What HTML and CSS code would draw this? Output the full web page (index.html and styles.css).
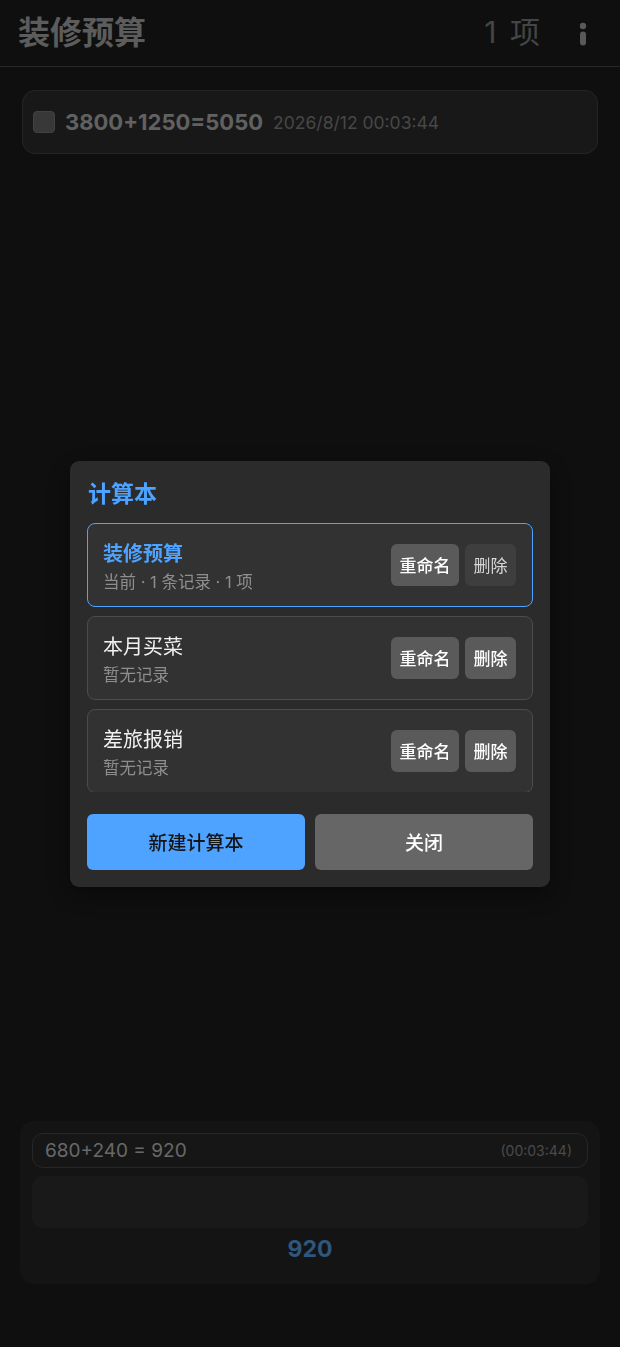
FILE: index.html
```html
<!DOCTYPE html>
<html lang="zh-CN">
<head>
    <meta charset="UTF-8">
    <meta name="viewport" content="width=device-width, initial-scale=1.0">
    <title>装修预算</title>
    <link rel="stylesheet" href="styles.css">
</head>
<body>

<div class="app">
    <header class="topbar">
        <h1 class="book-title">装修预算</h1>
        <div class="topbar-right">
            <span class="item-count">1 项</span>
            <span class="info-btn">
                <svg width="8" height="24" viewBox="0 0 8 24">
                    <circle cx="4" cy="4" r="3.2" fill="currentColor"/>
                    <rect x="1" y="9.5" width="6" height="14" rx="3" fill="currentColor"/>
                </svg>
            </span>
        </div>
    </header>

    <main class="records">
        <div class="record">
            <span class="check"></span>
            <span class="record-expr">3800+1250=5050</span>
            <span class="record-date">2026/8/12 00:03:44</span>
        </div>
    </main>

    <section class="calc-panel">
        <div class="last-line">
            <span class="last-expr">680+240 = 920</span>
            <span class="last-time">(00:03:44)</span>
        </div>
        <div class="input-area"></div>
        <div class="result">920</div>
    </section>
</div>

<!-- 计算本弹窗 -->
<div class="overlay">
    <div class="modal">
        <h2 class="modal-title">计算本</h2>
        <div class="book-list">
            <div class="book active">
                <div class="book-info">
                    <div class="book-name">装修预算</div>
                    <div class="book-meta">当前 · 1 条记录 · 1 项</div>
                </div>
                <div class="book-actions">
                    <button class="small-btn">重命名</button>
                    <button class="small-btn dim">删除</button>
                </div>
            </div>
            <div class="book">
                <div class="book-info">
                    <div class="book-name">本月买菜</div>
                    <div class="book-meta">暂无记录</div>
                </div>
                <div class="book-actions">
                    <button class="small-btn">重命名</button>
                    <button class="small-btn">删除</button>
                </div>
            </div>
            <div class="book">
                <div class="book-info">
                    <div class="book-name">差旅报销</div>
                    <div class="book-meta">暂无记录</div>
                </div>
                <div class="book-actions">
                    <button class="small-btn">重命名</button>
                    <button class="small-btn">删除</button>
                </div>
            </div>
        </div>
        <div class="modal-footer">
            <button class="big-btn primary">新建计算本</button>
            <button class="big-btn">关闭</button>
        </div>
    </div>
</div>

</body>
</html>
```

FILE: styles.css
```css
* {
    box-sizing: border-box;
}
body {
    margin: 0;
    background-color: #1e1e1e;
    color: #c0c0c0;
    font-family: Inter, "Noto Sans CJK SC", sans-serif;
}
.app {
    height: 1347px;
    display: flex;
    flex-direction: column;
}
.topbar {
    height: 67px;
    display: flex;
    align-items: center;
    justify-content: space-between;
    padding: 0 33px 7px 18px;
    border-bottom: 1px solid #4e4e4e;
}
.book-title {
    margin: 0;
    font-size: 32px;
    font-weight: 700;
    color: #b8b8b8;
}
.topbar-right {
    display: flex;
    align-items: center;
    gap: 39px;
}
.item-count {
    font-size: 30px;
    color: #8a8a8a;
    word-spacing: 5px;
}
.info-btn {
    color: #b2b2b2;
    display: flex;
    margin-top: 8px;
}
.records {
    flex: 1;
    padding: 23px 22px;
}
.record {
    height: 64px;
    display: flex;
    align-items: center;
    padding: 0 10px;
    background-color: #303030;
    border: 1px solid #4a4a4a;
    border-radius: 13px;
}
.check {
    width: 22px;
    height: 22px;
    border-radius: 4px;
    background-color: #707070;
    border: 1px solid #858585;
    margin-right: 10px;
}
.record-expr {
    font-size: 22px;
    font-weight: 700;
    color: #c2c2c2;
    margin-right: 10px;
}
.record-date {
    font-size: 17.5px;
    color: #8e8e8e;
}
.calc-panel {
    margin: 0 20px 63px;
    padding: 12px 12px 14px;
    background-color: #282828;
    border-radius: 14px;
}
.last-line {
    height: 35px;
    display: flex;
    align-items: center;
    justify-content: space-between;
    padding: 0 15px 0 12px;
    background-color: #2c2c2c;
    border: 1px solid #4e4e4e;
    border-radius: 11px;
}
.last-expr {
    font-size: 19px;
    color: #d0d0d0;
}
.last-time {
    font-size: 14px;
    color: #949494;
}
.input-area {
    height: 52px;
    margin-top: 8px;
    background-color: #333333;
    border-radius: 11px;
}
.result {
    height: 42px;
    display: flex;
    align-items: center;
    justify-content: center;
    font-size: 23px;
    font-weight: 700;
    color: #5eacf8;
}

/* 弹窗 */
.overlay {
    position: fixed;
    top: 0;
    left: 0;
    right: 0;
    bottom: 0;
    background-color: rgba(0, 0, 0, 0.5);
    display: flex;
    align-items: center;
    justify-content: center;
}
.modal {
    width: 480px;
    background-color: #2b2b2b;
    border-radius: 9px;
    padding: 17px;
    box-shadow: 0 8px 24px rgba(0, 0, 0, 0.4);
}
.modal-title {
    margin: 1px 0 13px 1px;
    font-size: 23px;
    font-weight: 700;
    color: #4da3ff;
    line-height: 31px;
}
.book-list {
    display: flex;
    flex-direction: column;
    gap: 9px;
    max-height: 269px;
    overflow: hidden;
}
.book {
    flex-shrink: 0;
    height: 84px;
    display: flex;
    align-items: center;
    justify-content: space-between;
    padding: 0 16px 0 15px;
    background-color: #323232;
    border: 1px solid #4c4c4c;
    border-radius: 8px;
}
.book.active {
    border: 1.5px solid #4da3ff;
}
.book-info {
    padding-top: 4px;
}
.book-name {
    font-size: 20px;
    color: #f0f0f0;
    line-height: 27px;
}
.book.active .book-name {
    color: #4da3ff;
    font-weight: 700;
}
.book-meta {
    font-size: 16.5px;
    color: #8e8e8e;
    margin-top: 1px;
}
.book-actions {
    display: flex;
    gap: 6px;
}
.small-btn {
    height: 42px;
    padding: 0 8.5px;
    border: none;
    border-radius: 6px;
    background-color: #5a5a5a;
    color: #ffffff;
    font-family: inherit;
    font-size: 17px;
    font-weight: 500;
}
.small-btn.dim {
    background-color: #3e3e3e;
    color: #d8d8d8;
    font-weight: 400;
}
.modal-footer {
    display: flex;
    gap: 10px;
    margin-top: 22px;
}
.big-btn {
    flex: 1;
    height: 56px;
    border: none;
    border-radius: 6px;
    background-color: #666666;
    color: #ffffff;
    font-family: inherit;
    font-size: 19px;
    font-weight: 500;
}
.big-btn.primary {
    background-color: #4da3ff;
    color: #151515;
}
```
